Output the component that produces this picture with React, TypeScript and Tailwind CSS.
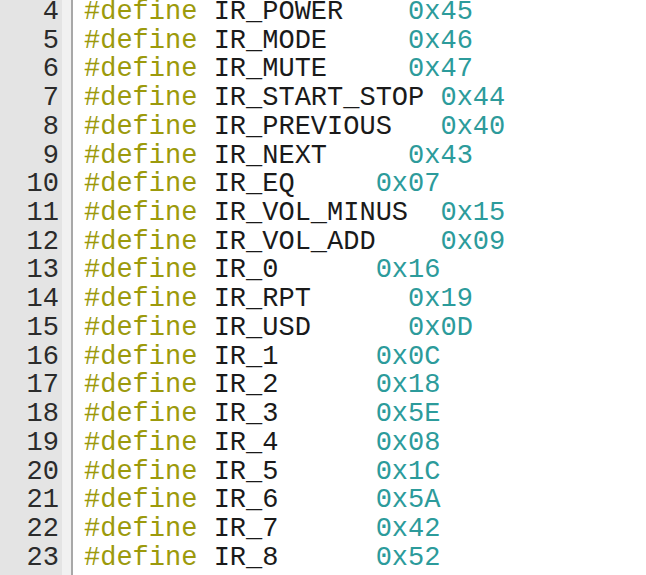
const lines: [number, string, number][] = [
  [4, 'IR_POWER', 20],
  [5, 'IR_MODE', 20],
  [6, 'IR_MUTE', 20],
  [7, 'IR_START_STOP', 22],
  [8, 'IR_PREVIOUS', 22],
  [9, 'IR_NEXT', 20],
  [10, 'IR_EQ', 18],
  [11, 'IR_VOL_MINUS', 22],
  [12, 'IR_VOL_ADD', 22],
  [13, 'IR_0', 18],
  [14, 'IR_RPT', 20],
  [15, 'IR_USD', 20],
  [16, 'IR_1', 18],
  [17, 'IR_2', 18],
  [18, 'IR_3', 18],
  [19, 'IR_4', 18],
  [20, 'IR_5', 18],
  [21, 'IR_6', 18],
  [22, 'IR_7', 18],
  [23, 'IR_8', 18],
];

const values = ['0x45', '0x46', '0x47', '0x44', '0x40', '0x43', '0x07', '0x15', '0x09', '0x16', '0x19', '0x0D', '0x0C', '0x18', '0x5E', '0x08', '0x1C', '0x5A', '0x42', '0x52'];

const App = () => {
  return (
    <div className="w-[646px] h-[575px] overflow-hidden bg-white flex font-['Liberation_Mono',monospace] text-[27px] leading-[28.72px]">
      {/* gutter */}
      <div className="w-[62px] bg-[#e4e4e4] shrink-0">
        <div className="-mt-[2px]">
          {lines.map(([n]) => (
            <div key={n} className="text-right pr-[3px] text-[#2b2b2b]">{n}</div>
          ))}
        </div>
      </div>
      <div className="w-[9px] bg-[#f1f1f1] shrink-0" />
      <div className="w-[2px] bg-[#a8a8a8] shrink-0" />

      {/* code */}
      <div className="flex-1 pl-[11px] whitespace-pre">
        <div className="-mt-[2px]">
          {lines.map(([n, name, col], i) => (
            <div key={n}>
              <span className="text-[#9c9a0c]">#define</span>
              <span className="text-[#1a1a1a]"> {name.padEnd(col - 8, ' ')}</span>
              <span className="text-[#2c9b9b]">{values[i]}</span>
            </div>
          ))}
        </div>
      </div>
    </div>
  );
};

export default App;
